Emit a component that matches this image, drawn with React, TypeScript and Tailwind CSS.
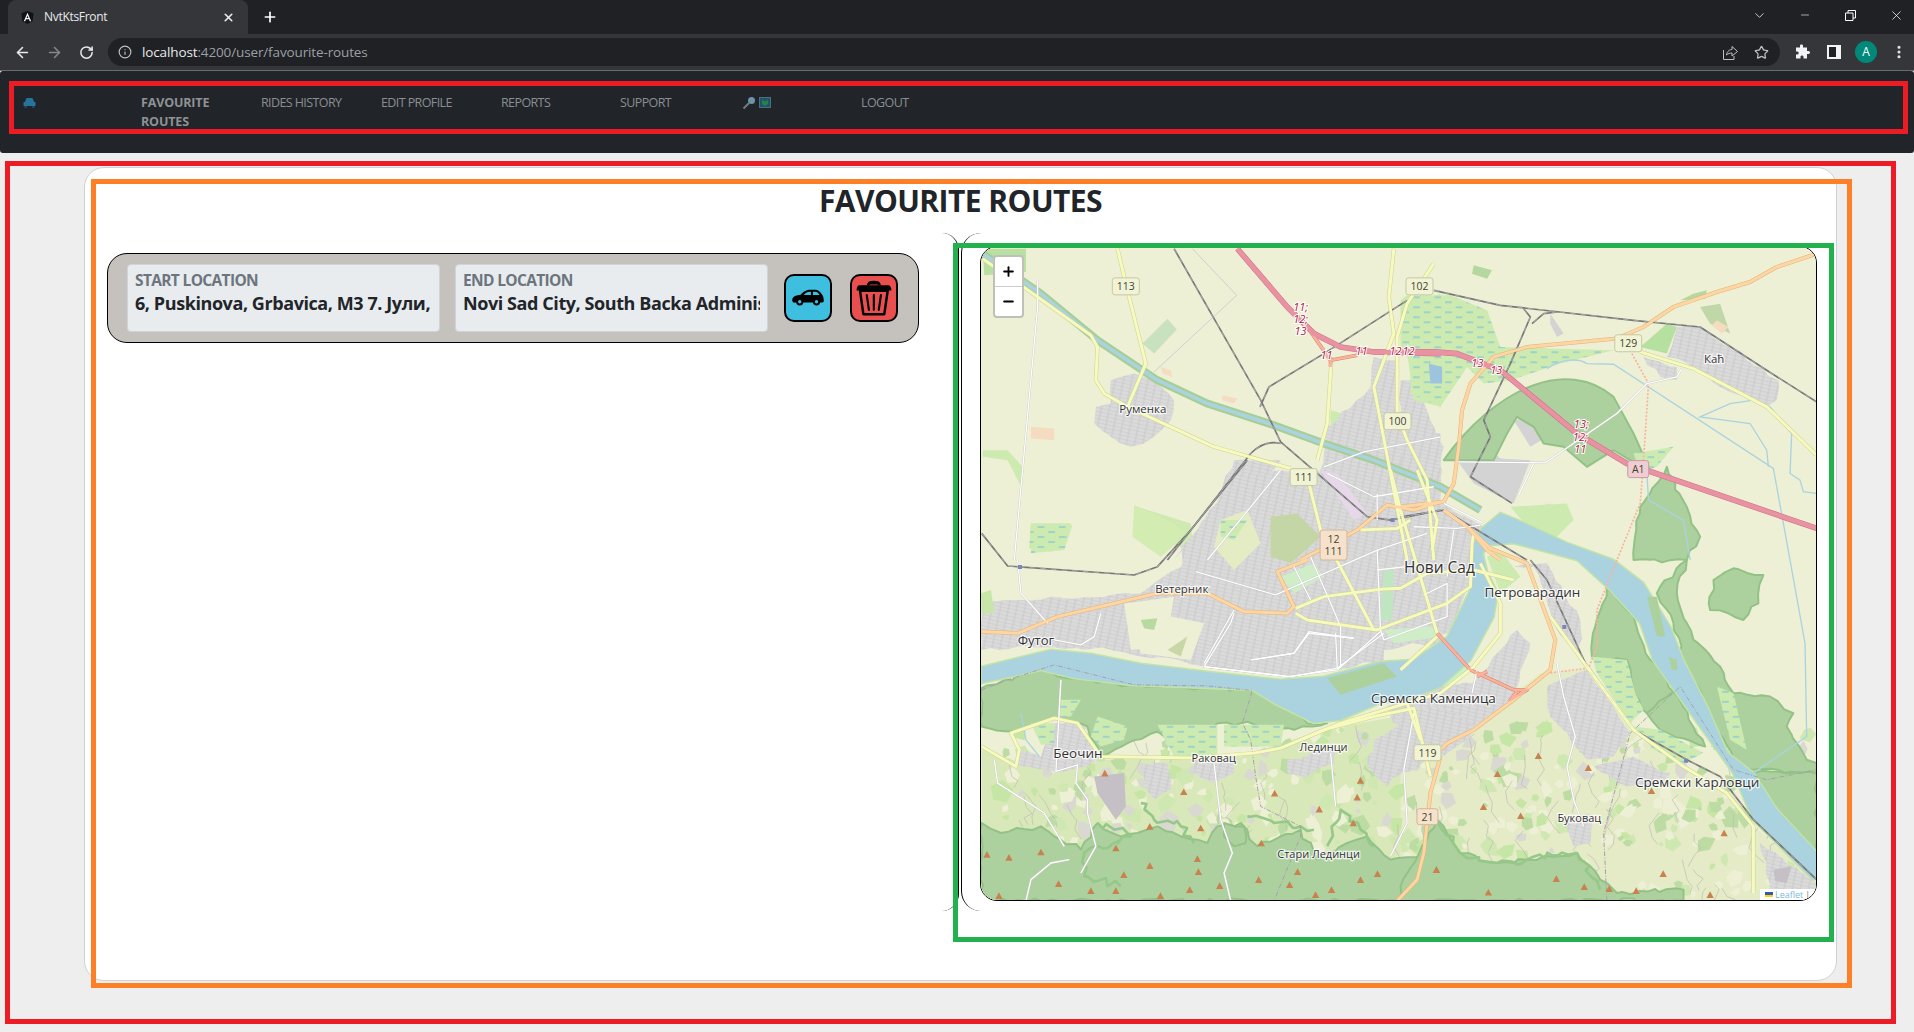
import { ArrowLeft, ArrowRight, ChevronDown, EllipsisVertical, Info, Minus, Plus, RotateCw, Star, X } from "lucide-react";

// every map shape is written in the pixel space of the crop it was read from
const frames = {
  a: "translate(940 220) scale(.33333)",
  b: "translate(1400 220) scale(.33333)",
  c: "translate(940 560) scale(.33333)",
  d: "translate(1400 560) scale(.33333)",
  e: "translate(1180 470) scale(.33333)",
  f: "translate(960 460) scale(.33333)",
};
type Frame = keyof typeof frames;

let seed = 41;
const rnd = () => {
  seed = (seed * 16807) % 2147483647;
  return seed / 2147483647;
};

// breaks up the straight edges of a M/L/Z outline so it looks like map data
const rough = (d: string, amount = 7, step = 22) => {
  if (d.includes("C")) return d;
  const pts = (d.match(/-?\d+(\.\d+)?,-?\d+(\.\d+)?/g) ?? []).map((p) => p.split(",").map(Number));
  const closed = d.includes("Z");
  const out: string[] = [];
  pts.forEach((p, i) => {
    const q = pts[i + 1] ?? (closed ? pts[0] : null);
    out.push(`${p[0]},${p[1]}`);
    if (!q) return;
    const n = Math.floor(Math.hypot(q[0] - p[0], q[1] - p[1]) / step);
    for (let k = 1; k < n; k++) {
      const x = p[0] + ((q[0] - p[0]) * k) / n + (rnd() - 0.5) * amount * 2;
      const y = p[1] + ((q[1] - p[1]) * k) / n + (rnd() - 0.5) * amount * 2;
      out.push(`${x.toFixed(0)},${y.toFixed(0)}`);
    }
  });
  return "M" + out.join(" L") + (closed ? " Z" : "");
};

const landuse: [Frame, string, string][] = [
  // hills south of the river
  ["c", "M122,570 L340,640 L480,600 L900,590 L1150,510 L1420,460 L1500,600 L1500,1024 L122,1024 Z", "#d9e8b8"],
  ["d", "M0,430 L240,480 L420,340 L560,330 L690,510 L850,620 L1000,700 L1060,800 L1250,960 L1250,1024 L0,1024 Z", "#e4ebc6"],
  // fields and small patches up north
  ["a", "M125,85 L255,85 L255,155 L130,165 Z", "#b8e0a0"],
  ["a", "M605,370 L680,295 L708,328 L640,400 Z", "#c8e2bf"],
  ["a", "M270,620 L340,625 L340,660 L270,655 Z", "#f5dcc0"],
  ["a", "M1000,750 L1100,800 L1100,900 L1000,1000 L950,960 L1000,850 Z", "#c7e7a8"],
  ["a", "M590,860 L750,910 L760,1000 L650,950 Z", "#cfeab0"],
  ["a", "M1170,570 L1240,590 L1230,630 L1170,625 Z", "#cdebb0"],
  ["a", "M1060,890 L1120,890 L1130,1020 L990,1020 Z", "#c5d6a6"],
  ["a", "M660,440 L690,450 L695,470 L665,460 Z", "#f5dcc0"],
  ["a", "M845,525 L890,535 L880,550 L845,540 Z", "#f5dcc0"],
  ["a", "M125,690 L200,690 L245,740 L240,800 L200,720 L125,710 Z", "#cdebb0"],
  ["b", "M720,380 L800,310 L830,320 L800,400 Z", "#b5e0a0"],
  ["b", "M880,220 L920,210 L915,235 L840,240 Z", "#b5d7a0"],
  ["b", "M900,260 L960,250 L990,340 L930,310 Z", "#c0d7a8"],
  ["b", "M220,135 L275,150 L260,175 L215,160 Z", "#b5d7a0"],
  ["b", "M950,300 L985,320 L965,340 L935,315 Z", "#f5dcc0"],
  ["b", "M435,850 L500,860 L480,905 L435,890 Z", "#e6d8e8"],
  ["b", "M330,860 L500,850 L520,900 L460,960 L380,920 Z", "#cdebb0"],
  ["b", "M35,345 L80,320 L145,310 L130,345 L60,375 Z", "#b5b08a"],
  ["b", "M170,720 L230,660 L300,715 L390,720 L340,850 L220,790 Z", "#d3d3d3"],
  ["b", "M340,600 L400,590 L440,650 L390,680 Z", "#d3d3d3"],
  ["b", "M450,280 L490,340 L470,350 L450,310 Z", "#d3d3d3"],
  ["a", "M270,930 L300,920 L300,945 L275,945 Z", "#a8a67c"],
  ["f", "M520,135 L640,190 L680,220 L600,290 L515,230 Z", "#d2ecb2"],
  ["f", "M210,190 L330,190 L300,270 L205,265 Z", "#cdebb0"],
];

const urban: [Frame, string][] = [
  ["a", "M510,480 L580,460 L640,480 L700,540 L690,600 L640,650 L570,680 L510,650 L460,610 L465,560 L510,550 Z"],
  ["a", "M1160,620 L1290,500 L1300,410 L1370,420 L1370,570 L1400,640 L1500,640 L1500,1020 L1200,1020 L1120,800 L1150,700 Z"],
  ["a", "M880,720 L1020,720 L970,800 L880,860 L820,930 L700,1020 L760,940 L840,820 Z"],
  ["b", "M800,410 L830,320 L900,320 L1135,480 L1130,540 L1100,560 L960,500 L900,450 Z"],
  ["b", "M730,410 L830,440 L830,480 L780,470 Z"],
  ["b", "M0,860 L120,850 L250,920 L250,1020 L0,1020 Z"],
  ["b", "M0,480 L40,480 L90,600 L130,680 L120,740 L100,800 L0,760 Z"],
  ["c", "M122,130 L240,120 L600,100 L700,30 L800,0 L1500,0 L1500,260 L1300,250 L1200,330 L1050,350 L790,320 L715,300 L460,265 L230,260 L120,270 Z"],
  ["e", "M0,230 L50,180 L180,20 L300,0 L410,0 L500,100 L790,100 L860,180 L880,220 L870,350 L800,490 L610,540 L610,570 L470,600 L330,620 L70,590 L0,570 Z"],
  ["e", "M1000,290 L1060,290 L1130,480 L1200,560 L1200,450 L1100,280 Z"],
  ["e", "M720,650 L880,640 L960,540 L1010,480 L1050,520 L1000,680 L900,760 L760,840 L640,760 L620,710 Z"],
  ["c", "M340,490 L420,490 L460,560 L480,590 L440,620 L340,635 L230,620 L240,570 L300,590 L340,500 Z"],
  ["c", "M760,600 L880,590 L880,640 L820,670 L760,640 Z"],
  ["c", "M600,620 L680,610 L690,690 L640,720 L610,680 Z"],
  ["c", "M1040,600 L1180,560 L1180,610 L1100,650 L1040,640 Z"],
  ["c", "M1100,880 L1170,870 L1190,930 L1130,950 Z"],
  ["c", "M1300,540 L1410,480 L1420,600 L1340,680 L1280,620 Z"],
  ["c", "M810,800 L850,790 L870,880 L820,880 Z"],
  ["d", "M0,440 L100,440 L230,500 L200,540 L100,600 L0,640 Z"],
  ["d", "M440,380 L560,330 L640,440 L690,520 L640,590 L560,600 L500,520 L450,470 Z"],
  ["d", "M580,620 L700,590 L810,640 L780,680 L680,680 Z"],
  ["d", "M490,780 L580,770 L570,850 L520,860 Z"],
  ["d", "M1080,850 L1250,970 L1250,1000 L1110,1000 Z"],
];

const parks: [Frame, string, string][] = [
  ["e", "M610,480 L750,470 L790,500 L640,520 Z", "#cfeec8"],
  ["e", "M610,300 L640,300 L635,450 L600,450 Z", "#bfe6c0"],
  ["e", "M300,320 L400,280 L430,320 L340,370 Z", "#cfeec8"],
  ["e", "M920,260 L960,240 L1020,320 L960,370 Z", "#cdebb0"],
  ["e", "M760,610 L850,570 L880,600 L790,650 Z", "#c9f2c9"],
  ["e", "M270,140 L350,130 L420,200 L330,280 L270,260 Z", "#c5d6a6"],
  ["e", "M120,150 L200,120 L240,220 L160,300 L100,230 Z", "#e3ecc2"],
  ["e", "M420,0 L470,10 L560,130 L520,150 Z", "#e6d8e8"],
  ["f", "M490,430 L600,430 L610,560 L510,570 Z", "#edf0d5"],
  ["f", "M545,475 L590,480 L580,505 L545,495 Z", "#b8d9a0"],
  ["f", "M60,400 L90,390 L100,460 L62,460 Z", "#c8e6a8"],
  ["c", "M560,130 L700,110 L690,170 L790,190 L750,300 L600,280 Z", "#edf0d5"],
  ["c", "M600,180 L650,175 L640,210 L610,205 Z", "#b8d9a0"],
  ["c", "M680,270 L740,230 L720,290 Z", "#c9d6a6"],
  ["c", "M460,650 L550,640 L555,740 L525,780 L470,700 Z", "#c5c0c5"],
  ["d", "M1120,930 L1175,920 L1160,970 L1125,965 Z", "#c5c0c5"],
];

const forest: [Frame, string][] = [
  ["c", "M122,790 L180,820 L300,800 L340,830 L420,870 L470,790 L540,830 L590,820 L650,800 L720,830 L800,850 L830,800 L900,790 L950,860 L1080,810 L1130,900 L1160,880 L1220,850 L1280,830 L1350,900 L1500,880 L1500,1024 L122,1024 Z"],
  ["c", "M122,385 L300,330 L380,355 L570,375 L800,385 L935,390 L1000,430 L1100,490 L1160,490 L1060,510 L900,490 L830,490 L750,590 L700,560 L650,515 L560,550 L480,590 L440,500 L340,475 L215,515 L122,500 Z"],
  ["c", "M850,790 L910,800 L915,850 L880,860 L850,830 Z"],
  ["b", "M130,720 C200,620 300,530 400,495 C480,465 570,470 640,530 L700,640 L745,740 L690,720 L640,690 L560,740 L490,680 L430,670 L400,620 L350,590 L320,640 L280,720 L170,720 Z"],
  ["b", "M720,860 L800,740 L900,950 L860,1020 L700,1020 Z"],
  ["d", "M110,780 L180,880 L290,910 L380,900 L530,880 L600,960 L650,1000 L850,990 L850,1024 L0,1024 L0,980 Z"],
  ["d", "M620,85 L585,200 L575,290 L680,300 L700,400 L740,460 L820,395 L750,300 L700,170 Z"],
  ["d", "M740,460 L820,395 L915,560 L780,510 Z"],
  ["d", "M1060,640 L1250,640 L1250,880 L1130,750 Z"],
  ["d", "M860,0 L830,100 L880,240 L960,320 L1000,400 L1110,410 L1180,460 L1160,500 L1220,600 L1250,610 L1250,640 L1060,630 L1000,600 L920,440 L850,300 L820,190 L770,100 L780,80 Z"],
  ["d", "M940,60 L1000,25 L1090,45 L1075,130 L1030,180 L930,150 Z"],
];

// darker winding edges of the forest on the hills
const forestBands: [Frame, string][] = [
  ["c", "M600,730 L640,780 L720,800 L760,850"],
  ["c", "M920,770 L1000,790 L1080,800 L1120,810"],
  ["c", "M1160,860 L1200,750 L1260,810 L1300,860"],
  ["c", "M470,790 L520,810 L570,830 L430,880 L430,950 L540,980"],
  ["d", "M110,790 L180,880 L290,910 L380,900 L530,880 L600,990"],
];

const wetland: [Frame, string][] = [
  ["a", "M1400,250 L1500,220 L1500,560 L1420,540 L1400,400 Z"],
  ["a", "M270,920 L395,915 L370,990 L270,1000 Z"],
  ["b", "M20,225 L150,225 L260,270 L300,380 L640,390 L480,430 L330,480 L250,490 L200,440 L120,560 L30,520 L30,420 L0,380 L0,240 Z"],
  ["b", "M700,700 L820,680 L770,740 L720,760 Z"],
  ["c", "M360,420 L420,420 L390,470 L355,470 Z"],
  ["c", "M470,470 L560,500 L550,540 L480,560 L450,530 Z"],
  ["c", "M650,495 L830,495 L830,590 L700,590 Z"],
  ["c", "M850,495 L1030,495 L1020,560 L850,560 Z"],
  ["c", "M270,490 L340,490 L340,550 L300,555 Z"],
  ["d", "M575,290 L680,300 L705,400 L730,450 L690,490 L590,340 Z"],
  ["d", "M700,500 L780,510 L910,580 L850,610 L760,570 Z"],
  ["d", "M950,380 L1000,400 L1040,570 L990,540 Z"],
  ["f", "M210,190 L330,190 L300,270 L205,265 Z"],
  ["f", "M780,180 L860,180 L820,240 L780,230 Z"],
];

const river =
  "M981,667 L1050,650 L1090,654 L1140,664 L1207,672 L1280,680 L1323,677 L1380,662 L1413,660 L1447,637 L1470,590 L1472,545 L1482,528 L1500,513 L1517,520 L1567,543 L1613,560 L1643,583 L1670,627 L1683,660 L1707,707 L1727,753 L1753,773 L1777,810 L1817,853 L1817,876 L1813,880 L1753,820 L1733,773 L1700,727 L1653,660 L1640,623 L1610,590 L1577,560 L1540,550 L1513,543 L1490,545 L1482,553 L1487,573 L1497,593 L1493,617 L1470,660 L1440,687 L1407,700 L1380,703 L1340,720 L1313,723 L1273,703 L1252,690 L1207,688 L1130,685 L1073,678 L1040,670 L981,683 Z";

const streams: [Frame, string][] = [
  ["b", "M440,445 C480,420 530,410 560,430 L640,432 L1120,745 L1170,1020"],
  ["b", "M1250,820 L1210,815 L1200,780 L1170,760 L1175,640 L1110,560 L1060,540 L990,550 L900,590 L1050,610 L1100,690 L1105,740"],
  ["b", "M740,760 L745,840 L850,900 L870,1020"],
  ["d", "M1170,0 L1215,250 L1220,530 L1060,640"],
  ["c", "M240,460 L255,540 L295,590"],
];

type Kind = "motorway" | "trunk" | "primary" | "secondary" | "minor" | "rail";
const roads: [Frame, Kind, string][] = [
  ["a", "minor", "M290,180 L290,260 L220,1020"],
  ["a", "minor", "M1020,750 L800,1020"],
  ["a", "minor", "M1150,740 L1270,695 L1500,650"],
  ["a", "minor", "M1160,760 L1300,830 L1480,800"],
  ["a", "minor", "M1310,820 L1310,900"],
  ["b", "minor", "M170,725 L435,728 L650,580 L740,490 L830,470 L845,445"],
  ["b", "minor", "M400,730 L355,825"],
  ["b", "minor", "M130,850 L250,910"],
  ["c", "minor", "M230,0 L240,100 L320,190"],
  ["c", "minor", "M340,240 L420,255 L460,230 L480,160"],
  ["c", "minor", "M880,160 L870,190 L790,320 L1040,350 L1190,330 L1320,215"],
  ["c", "minor", "M930,300 L1060,280 L1105,215 L1240,235"],
  ["c", "minor", "M1190,325 L1185,220"],
  ["c", "minor", "M360,360 L345,635 L410,615 L405,670 L440,720 L440,760 L465,860 L420,940"],
  ["c", "minor", "M160,600 L170,670 L310,760 L370,860"],
  ["c", "minor", "M385,900 L330,910 L270,960 L255,1024"],
  ["c", "minor", "M820,610 L840,780 L875,880 L850,940 L870,1024"],
  ["c", "minor", "M1170,580 L1185,740"],
  ["c", "minor", "M1420,460 L1390,630 L1400,790 L1350,890"],
  ["d", "minor", "M470,310 L490,410 L525,530 L500,620 L520,720 L550,800"],
  ["d", "minor", "M230,330 L215,400"],
  ["e", "minor", "M45,305 L285,375"],
  ["e", "minor", "M340,290 L390,390"],
  ["e", "minor", "M390,260 L480,470 L480,590"],
  ["e", "minor", "M285,375 L590,240 L740,190"],
  ["e", "minor", "M590,240 L600,480 L610,510 L800,440 L800,340 L730,375"],
  ["e", "minor", "M385,490 L520,505"],
  ["e", "minor", "M385,490 L340,550 L215,570"],
  ["e", "minor", "M70,590 L330,620 L470,595 L610,490"],
  ["e", "minor", "M160,420 L70,580"],
  ["e", "minor", "M590,300 L720,285"],
  ["e", "minor", "M820,180 L800,320"],
  ["e", "minor", "M700,170 L830,175 L900,165"],
  ["a", "secondary", "M530,85 L555,190 L615,430 L560,560"],
  ["a", "secondary", "M125,115 L290,230 L450,345 L470,380 L465,480 L490,520 L560,560 L820,680 L1050,745"],
  ["a", "secondary", "M1130,720 L1160,610 L1172,430"],
  ["a", "secondary", "M1360,85 L1345,230 L1360,340 L1300,500 L1350,760 L1400,1020"],
  ["a", "secondary", "M1480,130 L1400,250 L1370,350 L1370,580 L1400,660 L1460,780 L1480,1020"],
  ["b", "secondary", "M720,395 L880,445 L1100,560 L1250,705"],
  ["c", "secondary", "M122,560 L225,620 L235,570 L210,520 L340,475 L410,490 L480,590 L760,595 L940,580 L1020,565 L1150,510 L1300,470 L1420,445 L1470,650"],
  ["e", "secondary", "M385,40 L420,180 L580,480"],
  ["e", "secondary", "M630,0 L660,120 L770,490"],
  ["e", "secondary", "M710,0 L770,150 L755,240"],
  ["e", "secondary", "M345,415 L430,380 L600,358 L660,355 L740,310 L880,300 L1000,330"],
  ["e", "secondary", "M345,430 L380,450 L590,480 L800,400 L870,350 L875,220 L880,190"],
  ["e", "secondary", "M540,180 L650,175 L690,150"],
  ["e", "secondary", "M900,280 L960,400 L960,490 L880,590 L780,670 L680,700 L480,760 L360,810"],
  ["e", "secondary", "M680,700 L720,810"],
  ["d", "secondary", "M450,170 L560,320 L700,510 L850,620 L980,700 L1060,800 L1060,1000"],
  ["d", "secondary", "M110,230 L0,330"],
  ["a", "primary", "M1080,1020 L1250,930 L1340,855 L1420,870 L1500,845"],
  ["b", "primary", "M0,860 L130,845 L160,790 L175,680 L185,570 L210,490 L280,410 L380,380 L650,355 L730,320 L820,260 L950,215 L1050,185 L1130,140 L1250,100"],
  ["b", "primary", "M130,870 L200,920 L260,990 L300,1020"],
  ["c", "primary", "M122,215 L230,220 L350,170 L650,100 L800,100 L910,155 L1040,160 L1060,140 L1010,35 L1100,0"],
  ["c", "primary", "M1500,590 L1470,700 L1450,880 L1430,960 L1370,1024"],
  ["e", "primary", "M790,120 L860,170 L930,235 L1040,280 L1125,510 L1110,600 L1000,690 L880,780 L800,820 L780,840"],
  ["a", "trunk", "M1100,320 L1170,420 L1250,405"],
  ["a", "trunk", "M1170,410 L1170,440"],
  ["e", "trunk", "M770,490 L870,600 L1000,660"],
  ["e", "trunk", "M890,620 L920,605"],
  ["e", "trunk", "M1000,660 L1040,660 L990,690 L1010,665"],
  ["a", "motorway", "M890,85 L1040,260 L1120,340 L1200,380 L1300,395 L1500,400"],
  ["b", "motorway", "M0,395 L100,395 L170,400 L260,435 L300,450 L530,640 L680,730 L1250,925"],
  ["a", "rail", "M700,85 L960,540 L1020,665 L1130,760 L1280,890 L1350,900 L1500,870"],
  ["a", "rail", "M1400,240 L1150,400 L985,500 L958,560"],
  ["a", "rail", "M1020,670 C980,660 950,680 930,700 L680,1020"],
  ["b", "rail", "M100,210 L300,255 L700,300 L900,320 L1100,450 L1250,545"],
  ["b", "rail", "M370,265 L390,290 L330,430 L250,600 L270,650 L210,770 L335,850"],
  ["b", "rail", "M470,275 L430,280 L395,310"],
  ["b", "rail", "M0,890 L130,870 L230,930 L380,1020"],
  ["f", "rail", "M62,220 L140,318 L520,345 L590,320 L690,210 L860,0"],
  ["d", "rail", "M390,0 L440,60 L560,320 L700,510 L860,600 L960,650 L1060,780 L1250,960"],
];

const peaks: [Frame, number, number][] = (
  [
    [492, 640], [729, 696], [1002, 700], [1260, 662], [1250, 712], [1136, 748], [1238, 790], [780, 805], [627, 800],
    [525, 865], [300, 877], [204, 893], [138, 884], [770, 897], [962, 850], [627, 918], [773, 936], [549, 945], [353, 972],
    [450, 993], [525, 993], [174, 1008], [659, 1008], [747, 990], [837, 978], [954, 960], [1047, 975], [1071, 936],
    [1125, 1005], [1173, 990], [1260, 960], [1311, 942], [1488, 930],
  ] as [number, number][]
)
  .map(([x, y]) => ["c", x, y] as [Frame, number, number])
  .concat(
    (
      [
        [414, 588], [291, 642], [249, 741], [361, 768], [564, 624], [754, 693], [972, 820], [108, 930], [264, 998],
        [468, 957], [552, 981], [627, 987], [708, 993], [789, 942], [930, 1005],
      ] as [number, number][]
    ).map(([x, y]) => ["d", x, y] as [Frame, number, number]),
  );

// patchwork of fields and lanes in the hills
const hillPatches: { d: string; c: string }[] = [];
for (let i = 0; i < 560; i++) {
  const x = 1000 + rnd() * 810;
  const y = 725 + rnd() * 170;
  const r = 3 + rnd() * 7;
  const a = rnd() * 6;
  const pts = [0, 1, 2, 3, 4].map((k) => {
    const t = a + k * 1.26;
    const m = r * (0.5 + rnd() * 0.8);
    return `${(x + Math.cos(t) * m).toFixed(1)},${(y + Math.sin(t) * m).toFixed(1)}`;
  });
  hillPatches.push({
    d: "M" + pts.join(" L") + " Z",
    c: ["#edf0d5", "#c5e6a5", "#bcdca4", "#edf0d5", "#cfe8b2", "#d9d9d2"][Math.floor(rnd() * 6)],
  });
}
const hillLanes: string[] = [];
for (let i = 0; i < 90; i++) {
  let x = 1000 + rnd() * 810;
  let y = 725 + rnd() * 170;
  const pts = [`${x.toFixed(0)},${y.toFixed(0)}`];
  for (let k = 0; k < 4; k++) {
    x += (rnd() - 0.5) * 16;
    y += 3 + rnd() * 9;
    pts.push(`${x.toFixed(0)},${y.toFixed(0)}`);
  }
  hillLanes.push("M" + pts.join(" L"));
}

const shields = [
  { x: 1125, y: 286, w: 27, h: 17, t: ["113"], bg: "#f1f3d6", line: "#c6c9a0" },
  { x: 1419, y: 286, w: 27, h: 17, t: ["102"], bg: "#f1f3d6", line: "#c6c9a0" },
  { x: 1397, y: 421, w: 27, h: 17, t: ["100"], bg: "#f1f3d6", line: "#c6c9a0" },
  { x: 1303, y: 477, w: 27, h: 17, t: ["111"], bg: "#f1f3d6", line: "#c6c9a0" },
  { x: 1628, y: 343, w: 27, h: 17, t: ["129"], bg: "#f1f3d6", line: "#c6c9a0" },
  { x: 1427, y: 753, w: 27, h: 16, t: ["119"], bg: "#f1f3d6", line: "#c6c9a0" },
  { x: 1333, y: 545, w: 27, h: 30, t: ["12", "111"], bg: "#f6e2cc", line: "#d4b596" },
  { x: 1427, y: 817, w: 21, h: 16, t: ["21"], bg: "#f6e2cc", line: "#d4b596" },
  { x: 1638, y: 469, w: 21, h: 17, t: ["A1"], bg: "#f0cdd5", line: "#c79aa6" },
];

const junctions: [number, number, string][] = [
  [1300, 307, "11;"], [1300, 319, "12;"], [1300, 331, "13"], [1326, 355, "11"], [1361, 351, "11"], [1395, 351, "12"],
  [1408, 351, "12"], [1477, 363, "13"], [1496, 370, "13"], [1581, 424, "13;"], [1580, 437, "12;"], [1580, 449, "11"],
];

const places: [number, number, string, number][] = [
  [1142, 409, "Руменка", 11.5],
  [1714, 359, "Каћ", 11.5],
  [1181, 589, "Ветерник", 11.5],
  [1035, 640, "Футог", 13],
  [1439, 567, "Нови Сад", 15.5],
  [1532, 592, "Петроварадин", 13.5],
  [1433, 698, "Сремска Каменица", 13.5],
  [1077, 753, "Беочин", 13.5],
  [1213, 758, "Раковац", 11],
  [1323, 747, "Лединци", 11],
  [1318, 854, "Стари Лединци", 11],
  [1697, 782, "Сремски Карловци", 13.5],
  [1579, 818, "Буковац", 11],
];

const kinds: Record<Kind, { w: number; c: string; casing?: string; cw?: number; dash?: string }> = {
  minor: { w: 4, c: "#ffffff", casing: "#c4c4c4", cw: 6 },
  secondary: { w: 9, c: "#f7fabf", casing: "#cfd292", cw: 12 },
  primary: { w: 9, c: "#fcd6a4", casing: "#e6b274", cw: 12 },
  trunk: { w: 8, c: "#f9b29c", casing: "#d9806a", cw: 11 },
  motorway: { w: 14, c: "#e892a2", casing: "#d0708a", cw: 17 },
  rail: { w: 1.5, c: "#d8d8d8", casing: "#777777", cw: 5, dash: "16 16" },
};

const MapDrawing = () => (
  <svg viewBox="980 247 836 653" className="block w-full h-full">
    <defs>
      <pattern id="hatch" width="24" height="11" patternUnits="userSpaceOnUse" patternTransform="rotate(12)">
        <rect width="24" height="11" fill="#dadada" />
        <path d="M0,0 H24 M12,0 V11" stroke="#bcbcbc" strokeWidth="1.6" />
      </pattern>
      <pattern id="wet" width="64" height="30" patternUnits="userSpaceOnUse">
        <rect width="64" height="30" fill="#cdebb0" />
        <path d="M6,6 H26 M38,21 H58" stroke="#3ea3f5" strokeWidth="2" />
      </pattern>
    </defs>
    <rect x="980" y="247" width="836" height="653" fill="#edf0d5" />
    {landuse.map(([f, d, c], i) => (
      <path key={i} transform={frames[f]} d={d} fill={c} />
    ))}
    {hillPatches.map((p, i) => (
      <path key={i} d={p.d} fill={p.c} />
    ))}
    <path d={hillLanes.join(" ")} fill="none" stroke="#bdbdb6" strokeWidth="0.7" />
    {urban.map(([f, d], i) => (
      <path key={i} transform={frames[f]} d={rough(d, 6, 26)} fill="url(#hatch)" />
    ))}
    {parks.map(([f, d, c], i) => (
      <path key={i} transform={frames[f]} d={d} fill={c} />
    ))}
    {forest.map(([f, d], i) => (
      <path key={i} transform={frames[f]} d={rough(d)} fill="#add19e" stroke="#93c286" strokeWidth="6" strokeLinejoin="round" />
    ))}
    {forestBands.map(([f, d], i) => (
      <path key={i} transform={frames[f]} d={rough(d, 12, 16)} fill="none" stroke="#96c88a" strokeWidth="8" strokeLinejoin="round" />
    ))}
    {wetland.map(([f, d], i) => (
      <path key={i} transform={frames[f]} d={d} fill="url(#wet)" />
    ))}

    {/* canal and the Danube */}
    <path transform={frames.a} d="M125,100 L300,220 L470,360 L650,480 L800,550 L1000,615 L1150,670 L1300,720 L1500,800 L1620,870" fill="none" stroke="#a6ce95" strokeWidth="24" />
    <path transform={frames.a} d="M125,100 L300,220 L470,360 L650,480 L800,550 L1000,615 L1150,670 L1300,720 L1500,800 L1620,870" fill="none" stroke="#aad3df" strokeWidth="11" />
    <path d={river} fill="#aad3df" stroke="#c3e3a6" strokeWidth="3" strokeLinejoin="round" paintOrder="stroke" />
    <path transform={frames.c} d="M1160,355 L1330,310 L1370,350 L1200,405 Z" fill="#add19e" />
    <path transform={frames.d} d="M740,110 L770,110 L795,230 L770,230 Z" fill="#add19e" />
    <path transform={frames.d} d="M805,290 L830,300 L832,330 L815,330 Z" fill="#add19e" />
    {streams.map(([f, d], i) => (
      <path key={i} transform={frames[f]} d={d} fill="none" stroke="#aad3df" strokeWidth="4" />
    ))}
    <path transform={frames.b} d="M85,430 L125,440 L125,490 L90,490 Z" fill="#9dc4df" />

    {/* borders */}
    <path transform={frames.c} d="M122,390 L200,360 L340,315 L580,375 L800,378 L935,392 L905,490 L930,540 L945,650 L960,740 L1080,800 L1080,830 L1000,1024" fill="none" stroke="#a79fb0" strokeWidth="3" strokeDasharray="14 5 3 5" />
    <path transform={frames.d} d="M620,1024 L610,820 L690,520 L840,380 L1000,630 L1100,660 L1250,630" fill="none" stroke="#a79fb0" strokeWidth="3" strokeDasharray="14 5 3 5" />
    <path transform={frames.a} d="M755,85 L888,225 L640,455" fill="none" stroke="#c0c0c8" strokeWidth="2" />

    {/* dotted road under construction */}
    <path transform={frames.b} d="M695,400 L745,490 L730,720 L720,850 L650,1020" fill="none" stroke="#f9b29c" strokeWidth="5" strokeDasharray="6 5" />
    <path transform={frames.d} d="M650,0 L590,150 L590,260 L565,325 L440,340" fill="none" stroke="#f9b29c" strokeWidth="5" strokeDasharray="6 5" />

    {roads.map(([f, k, d], i) => {
      const s = kinds[k];
      return <path key={i} transform={frames[f]} d={d} fill="none" stroke={s.casing} strokeWidth={s.cw} strokeLinejoin="round" />;
    })}
    {roads.map(([f, k, d], i) => {
      const s = kinds[k];
      return <path key={i} transform={frames[f]} d={d} fill="none" stroke={s.c} strokeWidth={s.w} strokeDasharray={s.dash} strokeLinejoin="round" />;
    })}
    <rect x="1017" y="565" width="4" height="4" fill="#7a85b8" />
    <rect x="1562" y="625" width="4" height="4" fill="#7a85b8" />
    <rect x="1684" y="759" width="4" height="4" fill="#7a85b8" />
    <rect x="1390" y="518" width="4" height="4" fill="#7a85b8" />

    {peaks.map(([f, x, y], i) => (
      <path key={i} transform={frames[f]} d={`M${x - 11},${y + 10} L${x},${y - 10} L${x + 11},${y + 10} Z`} fill="#c9824f" />
    ))}

    {junctions.map(([x, y, t], i) => (
      <text key={i} x={x} y={y + 4} textAnchor="middle" fontFamily="'Open Sans', sans-serif" fontSize="11" fontStyle="italic" fill="#a8163a" stroke="#ffffff" strokeWidth="2" paintOrder="stroke">
        {t}
      </text>
    ))}
    {places.map(([x, y, t, size], i) => (
      <text key={i} x={x} y={y + size * 0.36} textAnchor="middle" fontFamily="'Open Sans', sans-serif" fontSize={size} fill="#333333" stroke="#ffffff" strokeOpacity="0.75" strokeWidth="2.5" paintOrder="stroke">
        {t}
      </text>
    ))}
    {shields.map((s) => (
      <g key={s.t.join()}>
        <rect x={s.x - s.w / 2} y={s.y - s.h / 2} width={s.w} height={s.h} rx="2.5" fill={s.bg} stroke={s.line} />
        {s.t.map((t, i) => (
          <text key={t} x={s.x} y={s.y + 4 + (i - (s.t.length - 1) / 2) * 12} textAnchor="middle" fontFamily="'Open Sans', sans-serif" fontSize="10.5" fill="#44442c">
            {t}
          </text>
        ))}
      </g>
    ))}
  </svg>
);

const AngularLogo = () => (
  <svg width="13" height="13" viewBox="0 0 14 14">
    <path d="M7 0 L13.5 2.3 L12.5 11 L7 14 L1.5 11 L.5 2.3 Z" fill="#111214" />
    <path d="M7 2 L11 11 H9.4 L8.6 9 H5.4 L4.6 11 H3 Z M7 5 L6 7.6 H8 Z" fill="#f1f3f4" fillRule="evenodd" />
  </svg>
);

const NavCar = () => (
  <svg width="13" height="10" viewBox="0 0 13 10">
    <path d="M3 1 Q3.4 0 4.5 0 H8.5 Q9.6 0 10 1 L11 4 H12.5 V8 H.5 V4 H2 Z" fill="#26749c" />
    <rect x="1.5" y="8" width="2.4" height="2" fill="#1b4b66" />
    <rect x="9.1" y="8" width="2.4" height="2" fill="#1b4b66" />
  </svg>
);

const NavIcons = () => (
  <div className="flex items-center gap-[3px]">
    <svg width="14" height="14" viewBox="0 0 14 14">
      <circle cx="9.5" cy="4.5" r="3.5" fill="#6f93aa" />
      <path d="M7 7 L1.5 12.5" stroke="#737b82" strokeWidth="2" />
    </svg>
    <svg width="12" height="11" viewBox="0 0 12 11">
      <rect x=".5" y=".5" width="11" height="10" fill="#1d5566" stroke="#4a6f7a" />
      <path d="M3 2.5 L6 4.5 L9 2.5 V7 L6 9 L3 7 Z" fill="#2a7d4f" />
    </svg>
  </div>
);

const CarIcon = () => (
  <svg viewBox="0 0 143 143" className="w-full h-full">
    <path d="M15,80 C15,70 20,66 30,63 L45,60 C53,51 62,44 74,42 L100,42 C108,42 116,50 122,60 C126,64 128,72 128,84 L124,88 L18,88 Z" fill="#000" />
    <path d="M56,61 C62,54 68,50 78,49 L82,49 L82,61 Z M89,49 L100,49 C106,50 110,56 113,61 L89,61 Z" fill="#3fbfe0" />
    <circle cx="42" cy="85" r="13" fill="#000" />
    <circle cx="42" cy="85" r="6" fill="#3fbfe0" />
    <circle cx="102" cy="85" r="13" fill="#000" />
    <circle cx="102" cy="85" r="6" fill="#3fbfe0" />
  </svg>
);

const TrashIcon = () => (
  <svg viewBox="0 0 143 143" className="w-full h-full">
    <path d="M52,30 C54,16 88,16 90,30" fill="none" stroke="#000" strokeWidth="8" />
    <path d="M52,22 C56,14 86,14 90,22 L90,28 L52,28 Z" fill="#000" />
    <path d="M22,30 L120,30 C126,33 128,40 128,47 L15,47 C15,40 16,33 22,30 Z" fill="#000" />
    <path d="M26,48 L116,48 L105,124 L37,124 Z" fill="none" stroke="#000" strokeWidth="8" strokeLinejoin="round" />
    <path d="M48,62 L55,110 M71,62 L71,110 M94,62 L87,110" fill="none" stroke="#000" strokeWidth="7" strokeLinecap="round" />
  </svg>
);

const LocationField = ({ label, value }: { label: string; value: string }) => (
  <div className="flex flex-col w-[313px] h-[68px] bg-[#e9ecef] border border-[#ced4da] rounded px-[7px] pt-[4px]">
    <span className="text-[15.5px] leading-[22px] font-bold text-[#6c757d] tracking-[-0.65px]">{label}</span>
    <input
      readOnly
      value={value}
      className="w-full bg-transparent outline-none text-[18px] leading-[24px] font-bold text-[#212529] tracking-[-0.42px] font-['Open_Sans',sans-serif]"
    />
  </div>
);

const App = () => {
  return (
    <div className="relative flex flex-col w-[1914px] h-[1032px] overflow-hidden bg-[#eeeeee] font-['Open_Sans',sans-serif]">
      {/* browser tabs */}
      <div className="flex items-end justify-between h-[34px] bg-[#202124] text-white">
        <div className="flex items-center h-full pl-2">
          <div className="flex items-center w-[240px] h-full pl-[13px] pr-3 bg-[#35363a] rounded-t-lg">
            <AngularLogo />
            <span className="ml-[10px] text-[12px] text-[#e8eaed] tracking-[-0.3px]">NvtKtsFront</span>
            <X size={13} strokeWidth={3} className="ml-auto mr-[1px] text-[#e8eaed]" />
          </div>
          <Plus size={16} strokeWidth={2.5} className="ml-[14px]" />
        </div>
        <div className="flex items-center h-full pr-[10px] pb-1">
          <ChevronDown size={15} strokeWidth={1.2} className="mr-[32px]" />
          <Minus size={12} strokeWidth={1.2} className="mr-[34px]" />
          <svg width="11" height="11" viewBox="0 0 11 11" className="mr-[33px]" fill="none" stroke="#fff">
            <path d="M.5 3 H8 V10.5 H.5 Z M3 3 V.5 H10.5 V8 H8" />
          </svg>
          <X size={15} strokeWidth={1.2} />
        </div>
      </div>

      {/* browser toolbar */}
      <div className="flex items-center h-[36px] pl-[14px] pb-0 bg-[#35363a] border-b border-[#6a6b6e] box-content">
        <ArrowLeft size={17} strokeWidth={2.2} className="text-[#e8eaed]" />
        <ArrowRight size={17} strokeWidth={2.2} className="ml-[15px] text-[#85878a]" />
        <RotateCw size={15} strokeWidth={2.4} className="ml-[16px] text-[#e8eaed]" />
        <div className="flex items-center w-[1672px] h-[28px] ml-[14px] pl-[10px] pr-[11px] rounded-full bg-[#202124]">
          <Info size={14} className="text-[#bdc1c6]" />
          <span className="ml-[10px] pt-px text-[13.5px] tracking-[-0.13px] text-[#e8eaed]">localhost</span>
          <span className="pt-px text-[13.5px] tracking-[-0.13px] text-[#9aa0a6]">:4200/user/favourite-routes</span>
          <svg width="15" height="15" viewBox="0 0 15 15" fill="none" stroke="#bdc1c6" className="ml-auto">
            <path d="M.5 5 V14.5 H11 V11 M3.5 10 C4 6 7 4.5 9 4.5 V1.5 L14.5 6.5 L9 11 V8 C7 8 5 8.5 3.5 10 Z" />
          </svg>
          <Star size={15} strokeWidth={2} className="ml-[16px] text-[#bdc1c6]" />
        </div>
        <svg width="16" height="16" viewBox="0 0 16 16" className="ml-[14px]" fill="#f1f3f4">
          <path d="M6 1.5 C6 0 9 0 9 1.5 V3.5 H13 V7 H14.5 C16.5 7 16.5 10 14.5 10 H13 V14.5 H9.5 V13 C9.5 11 6.5 11 6.5 13 V14.5 H2 V10.5 H3.5 C5 10.5 5 7.5 3.5 7.5 H2 V3.5 H6 Z" />
        </svg>
        <svg width="14" height="14" viewBox="0 0 14 14" className="ml-[17px]">
          <rect width="14" height="14" fill="#f1f3f4" />
          <rect x="2" y="2" width="7" height="10" fill="#202124" />
        </svg>
        <div className="flex items-center justify-center w-[22px] h-[22px] ml-[14px] rounded-full bg-[#00897b] text-[12px] text-white">A</div>
        <EllipsisVertical size={16} strokeWidth={2.6} className="ml-[14px] text-[#e8eaed]" />
      </div>

      {/* app navbar */}
      <nav className="flex items-start h-[82px] pt-[22px] pl-[23px] bg-[#212529] rounded-[3px] text-[12.5px] leading-[19px] tracking-[-0.6px] text-[#8b8e92]">
        <div className="w-[118px] h-[19px] flex items-center">
          <NavCar />
        </div>
        <div className="w-[120px] font-bold text-[#8f9295] tracking-[-0.15px]">
          FAVOURITE
          <br />
          ROUTES
        </div>
        <div className="w-[120px]">RIDES HISTORY</div>
        <div className="w-[120px]">EDIT PROFILE</div>
        <div className="w-[119px]">REPORTS</div>
        <div className="w-[122px]">SUPPORT</div>
        <div className="w-[119px] h-[19px] flex items-center">
          <NavIcons />
        </div>
        <div>LOGOUT</div>
      </nav>

      {/* page */}
      <main className="pt-[14px] pl-[84px]">
        <div className="flex flex-col w-[1753px] h-[814px] pt-[13px] pl-[22px] bg-white border border-[#cfd2d4] rounded-[20px]">
          <h2 className="h-[40px] pr-[22px] text-center text-[30px] leading-[40px] font-bold text-[#212529] tracking-[-0.55px]">FAVOURITE ROUTES</h2>
          <div className="flex mt-[12px]">
            <div className="w-[812px] pt-[20px]">
              <div className="flex items-center h-[90px] pl-[19px] bg-[#c5c1bc] border border-black rounded-[20px]">
                <LocationField label="START LOCATION" value="6, Puskinova, Grbavica, M3 7. Јули," />
                <div className="w-[15px] shrink-0" />
                <LocationField label="END LOCATION" value="Novi Sad City, South Backa Administrative District" />
                <div className="w-[48px] h-[48px] ml-[16px] p-[2px] bg-[#3fbfe0] border-2 border-black rounded-[10px] overflow-hidden">
                  <CarIcon />
                </div>
                <div className="w-[48px] h-[48px] ml-[18px] bg-[#ea4f4f] border-2 border-black rounded-[10px] overflow-hidden">
                  <TrashIcon />
                </div>
              </div>
            </div>
            <div className="w-[17px] h-[678px] ml-[23px] border-r border-black rounded-r-[20px]" />
            <div className="w-[20px] h-[678px] ml-[2px] border-l border-black rounded-l-[20px]" />
            <div className="relative w-[837px] h-[655px] mt-[13px] -ml-[1px] bg-white border border-black rounded-[17px] overflow-hidden">
              <MapDrawing />
              <div className="absolute left-[12px] top-[8px] flex flex-col w-[31px] border-2 border-[#bfc0b8] rounded bg-white text-black">
                <div className="flex items-center justify-center h-[30px] border-b border-[#ccc]">
                  <Plus size={15} strokeWidth={3} />
                </div>
                <div className="flex items-center justify-center h-[29px]">
                  <Minus size={15} strokeWidth={3} />
                </div>
              </div>
              <div className="absolute right-0 bottom-0 flex items-center h-[11px] w-[56px] pl-[5px] bg-white text-[9px] leading-[11px] text-[#7cb8d6]">
                <span className="flex flex-col w-[8px] h-[5px] mr-[2px]">
                  <span className="h-1/2 bg-[#3457b8]" />
                  <span className="h-1/2 bg-[#ffd500]" />
                </span>
                Leaflet
                <span className="ml-[2px] text-[#777]">|</span>
              </div>
            </div>
          </div>
        </div>
      </main>

      {/* annotation frames drawn on top of the screenshot */}
      <div className="absolute left-[9px] top-[81px] w-[1899px] h-[53px] border-[5px] border-[#ed1c24]" />
      <div className="absolute left-[5px] top-[161px] w-[1891px] h-[863px] border-[5px] border-[#ed1c24]" />
      <div className="absolute left-[91px] top-[179px] w-[1761px] h-[809px] border-[5px] border-[#ff7f27]" />
      <div className="absolute left-[953px] top-[243px] w-[881px] h-[699px] border-[5px] border-[#22b14c]" />
    </div>
  );
};

export default App;
